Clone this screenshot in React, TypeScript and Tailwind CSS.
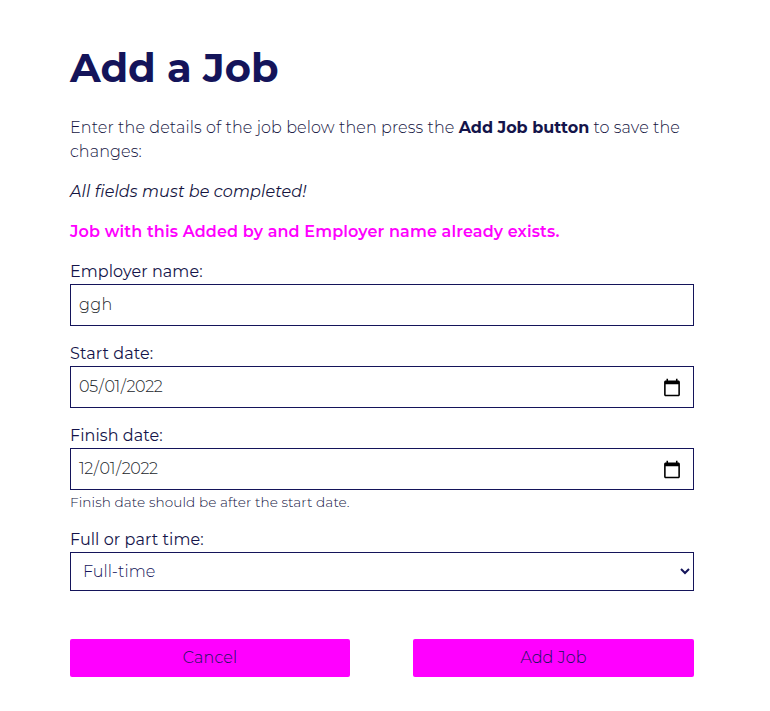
const field =
  "block h-[42px] w-full appearance-none rounded-none border border-[#14145a] bg-white px-2 text-base font-light text-[#212529] outline-none";
const textField = `${field} pb-0.5 tracking-[0.3px]`;
const dateField = `${field} pl-[7px] pr-[9px] tracking-[-0.4px] [&::-webkit-calendar-picker-indicator]:mt-0.5 [&::-webkit-calendar-picker-indicator]:size-5 [&::-webkit-calendar-picker-indicator]:bg-contain`;
const label = "block h-6 text-base leading-6 tracking-[0.07px] text-[#14144a]";
const button =
  "h-[38px] rounded-[2px] bg-[#ff00ff] text-center text-base font-light leading-[38px] tracking-[0.1px] text-[#14145a]";

export default function App() {
  return (
    <main className="min-h-[711px] bg-white pt-11 pr-[76px] pl-[70px] font-['Montserrat','Inter',sans-serif] text-[#14145a]">
      <h1 className="mb-6 h-12 text-[40px] leading-12 font-bold">Add a Job</h1>
      <p className="mb-4 text-base leading-6 font-light tracking-[0.1px] text-[#14143f]">
        Enter the details of the job below then press the{" "}
        <strong className="font-bold tracking-normal text-[#14144a]">Add Job button</strong> to save the changes:
      </p>
      <p className="mb-4 text-base leading-6 tracking-[0.11px] text-[#14143f] italic">All fields must be completed!</p>
      <p className="mb-4 text-base leading-6 font-semibold tracking-[0.145px] text-[#ff00ff]">
        Job with this Added by and Employer name already exists.
      </p>
      <form>
        <div className="mb-4">
          <label className={label}>Employer name:</label>
          <input className={textField} type="text" defaultValue="ggh" />
        </div>
        <div className="mb-4">
          <label className={label}>Start date:</label>
          <input className={dateField} type="date" defaultValue="2022-05-01" />
        </div>
        <div className="mb-4">
          <label className={label}>Finish date:</label>
          <input className={dateField} type="date" defaultValue="2022-12-01" />
          <small className="block h-[22px] text-[13.6px] leading-[25px] font-light tracking-[0.09px] text-[#14143f]">
            Finish date should be after the start date.
          </small>
        </div>
        <div className="mb-12">
          <label className={label}>Full or part time:</label>
          <select className="block h-[39px] w-full rounded-none border border-[#14145a] bg-white px-2 text-base font-light text-[#14145a] outline-none">
            <option>Full-time</option>
            <option>Part-time</option>
          </select>
        </div>
        <div className="flex justify-between">
          <button type="button" className={`${button} w-[280px]`}>Cancel</button>
          <button type="button" className={`${button} w-[281px]`}>Add Job</button>
        </div>
      </form>
    </main>
  );
}
